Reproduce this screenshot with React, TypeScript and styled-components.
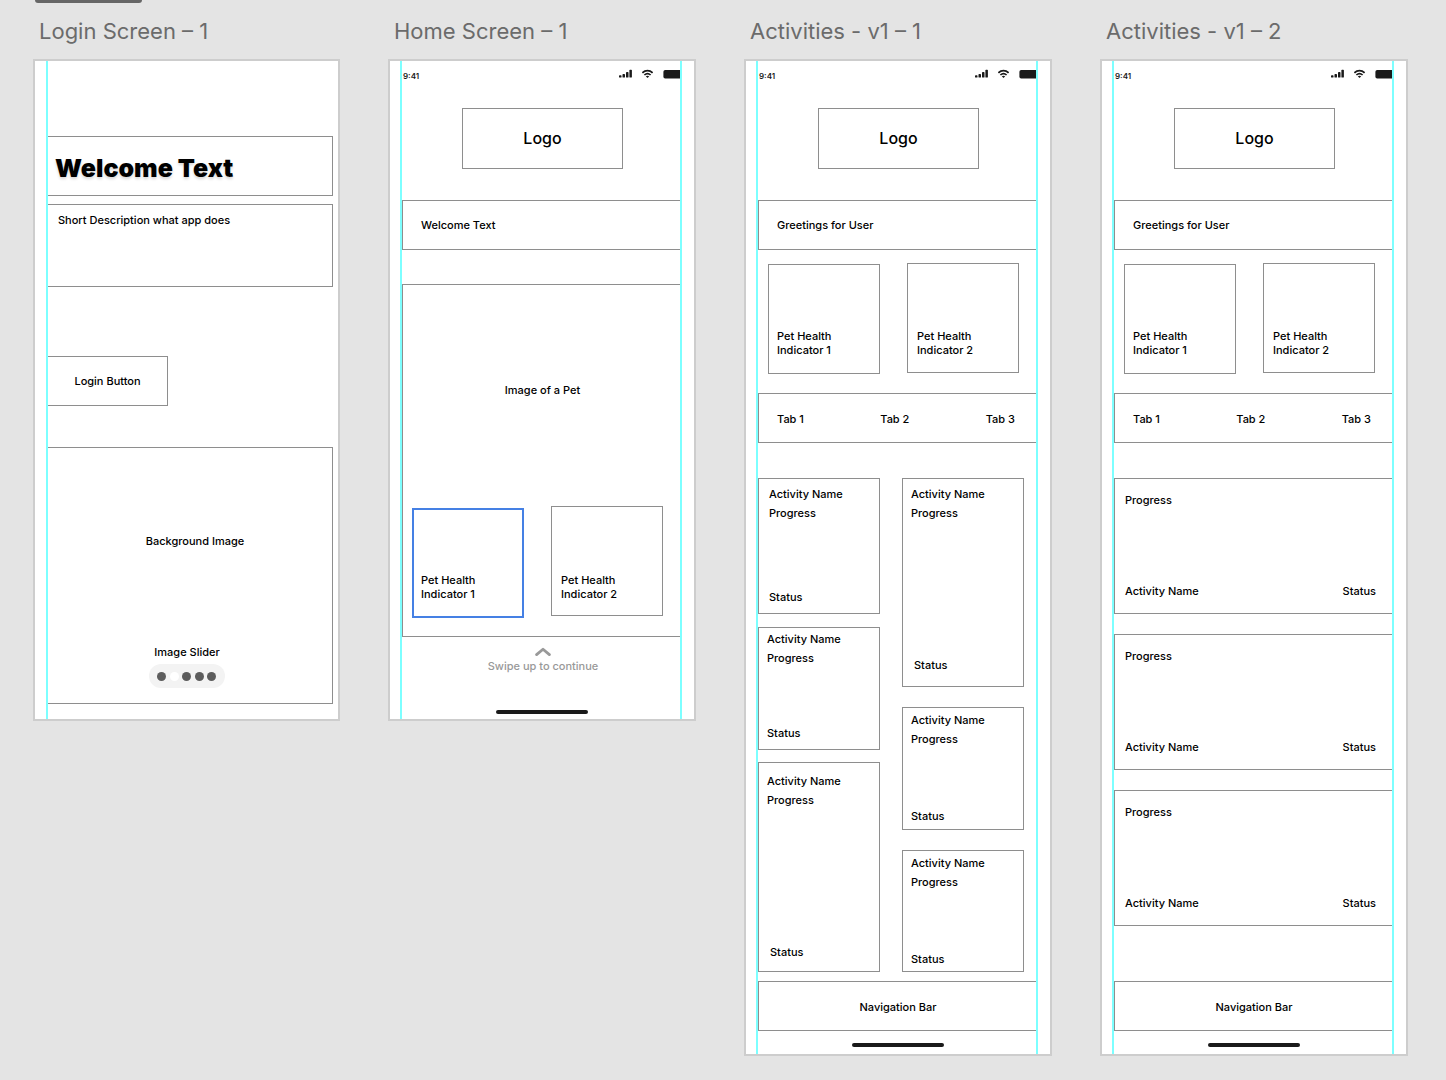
import React from "react";
import styled, { createGlobalStyle } from "styled-components";

const LINE = "#8e8e8e";
const GUIDE = "#7dffff";
const INK = "#1a1a1a";

const GlobalStyle = createGlobalStyle`
  *, *::before, *::after { box-sizing: border-box; }
  body {
    margin: 0;
    background: #e4e4e4;
    color: #000;
    font-family: Inter, "Liberation Sans", sans-serif;
    font-size: 11px;
    font-weight: 500;
    line-height: 14px;
  }
  h1, h2, p { margin: 0; font: inherit; }
  button { margin: 0; padding: 0; border: 0; background: none; color: inherit; font: inherit; }
`;

const Canvas = styled.main`
  min-height: 100vh;
  padding-bottom: 24px;
`;

const CanvasTab = styled.div`
  width: 107px;
  height: 3px;
  margin-left: 35px;
  border-radius: 0 0 6px 6px;
  background: #666;
`;

const Boards = styled.div`
  display: grid;
  grid-template-columns: 307fr 308fr 308fr 308fr;
  align-items: start;
  gap: 48px;
  padding: 14px 38px 0 33px;
`;

const BoardTitle = styled.h2`
  padding: 0 6px;
  margin-bottom: 14px;
  color: #6b6b6b;
  font-size: 22px;
  font-weight: 400;
  line-height: 28px;
  white-space: nowrap;
`;

const Artboard = styled.div<{ $single?: boolean }>`
  display: flex;
  border: 2px solid #cdcdcd;
  background: #fff;
  padding: ${(p) => (p.$single ? "0 5px 0 11px" : "0 12px 0 10px")};
`;

const Guides = styled.div<{ $single?: boolean }>`
  flex: 1;
  min-width: 0;
  display: flex;
  flex-direction: column;
  border-left: 2px solid ${GUIDE};
  border-right: ${(p) => (p.$single ? "0" : `2px solid ${GUIDE}`)};
`;

/* login */

const LoginBody = styled.div`
  display: flex;
  flex-direction: column;
  padding: 75px 0 15px;
`;

const OpenLeftBox = styled.div`
  border: 1px solid ${LINE};
  border-left: 0;
`;

const Headline = styled(OpenLeftBox)`
  display: flex;
  align-items: center;
  height: 60px;
  padding: 4px 7px 0;
`;

const HeadlineText = styled.h1`
  font-size: 25px;
  font-weight: 900;
  line-height: 30px;
  text-shadow: 0 2px 3px rgba(0, 0, 0, 0.16);
  white-space: nowrap;
`;

const Description = styled(OpenLeftBox)`
  height: 83px;
  margin-top: 8px;
  padding: 8px 10px;
`;

const LoginButton = styled.button`
  width: 120px;
  height: 50px;
  margin-top: 69px;
  border: 1px solid ${LINE};
  border-left: 0;
`;

const Background = styled(OpenLeftBox)`
  display: flex;
  flex-direction: column;
  justify-content: space-between;
  height: 257px;
  margin-top: 41px;
  padding: 86px 0 15px;
  text-align: center;
`;

const BackgroundLabel = styled.p`
  padding-left: 10px;
`;

const Slider = styled.div`
  display: flex;
  flex-direction: column;
  align-items: center;
  gap: 5px;
  padding-right: 6px;
`;

const Dots = styled.div`
  display: flex;
  align-items: center;
  justify-content: space-between;
  width: 76px;
  height: 24px;
  padding: 0 9px 0 8px;
  border-radius: 12px;
  background: #f3f3f3;
`;

const Dot = styled.button<{ $on?: boolean }>`
  width: 9px;
  height: 9px;
  border-radius: 50%;
  background: ${(p) => (p.$on ? "#fff" : "#5c5c5c")};
`;

/* phone chrome */

const StatusRow = styled.div`
  display: flex;
  justify-content: space-between;
  height: 47px;
  padding: 8px 0 0 1px;
`;

const Clock = styled.span`
  padding-top: 1px;
  color: ${INK};
  font-size: 8px;
  font-weight: 600;
  line-height: 12px;
`;

const StatusIcons = styled.div`
  display: flex;
  align-items: flex-start;
  gap: 10px;
`;

const LogoRow = styled.div`
  display: flex;
  justify-content: center;
  padding-left: 3px;
`;

const Logo = styled.div`
  display: flex;
  align-items: center;
  justify-content: center;
  width: 161px;
  height: 61px;
  padding-bottom: 2px;
  border: 1px solid ${LINE};
  font-size: 16px;
  line-height: 20px;
`;

const OpenRightBox = styled.div`
  border: 1px solid ${LINE};
  border-right: 0;
`;

const Banner = styled(OpenRightBox)`
  display: flex;
  align-items: center;
  height: 50px;
  margin-top: 31px;
  padding: 0 18px;
`;

const HomeBar = styled.div<{ $bottom: number }>`
  align-self: center;
  width: 92px;
  height: 4px;
  margin: auto 0 ${(p) => p.$bottom}px 2px;
  border-radius: 2px;
  background: ${INK};
`;

/* home */

const PetImage = styled(OpenRightBox)`
  display: flex;
  flex-direction: column;
  justify-content: space-between;
  height: 353px;
  margin-top: 34px;
  padding: 98px 0 18px;
`;

const PetLabel = styled.p`
  text-align: center;
  padding-left: 2px;
`;

const Pair = styled.div<{ $inBox?: boolean }>`
  display: grid;
  grid-template-columns: 1fr 1fr;
  align-items: end;
  gap: 27px;
  padding: ${(p) => (p.$inBox ? "0 17px 0 9px" : "0 17px 0 10px")};
`;

const Indicator = styled.div<{ $selected?: boolean; $raise?: number }>`
  display: flex;
  align-items: flex-end;
  height: 110px;
  margin-bottom: ${(p) => p.$raise ?? 0}px;
  padding: 0 ${(p) => (p.$selected ? 7 : p.$raise ? 9 : 8)}px ${(p) => (p.$selected ? 15 : 16 - (p.$raise ?? 0))}px;
  border: ${(p) => (p.$selected ? "2px solid #4580e4" : `1px solid ${LINE}`)};
`;

const Swipe = styled.button`
  display: flex;
  flex-direction: column;
  align-items: center;
  align-self: center;
  gap: 2px;
  margin: 10px 0 0 4px;
  color: #999;
`;

const HomeTail = styled.div`
  display: flex;
  flex-direction: column;
  height: 82px;
`;

/* activities */

const ActivityHead = styled.div`
  padding-top: 13px;
`;

const Tabs = styled(OpenRightBox)`
  display: flex;
  align-items: center;
  justify-content: space-between;
  height: 50px;
  margin-top: 19px;
  padding: 2px 21px 0 18px;
`;

const Columns = styled.div`
  display: grid;
  grid-template-columns: 1fr 1fr;
  gap: 22px;
  height: 494px;
  margin-top: 35px;
  padding-right: 12px;
`;

const Column = styled.div`
  display: flex;
  flex-direction: column;
  justify-content: space-between;
`;

const Card = styled.article<{ $h: number; $pad: string }>`
  display: flex;
  flex-direction: column;
  height: ${(p) => p.$h}px;
  padding: ${(p) => p.$pad};
  border: 1px solid ${LINE};
  line-height: 19px;
`;

const CardStatus = styled.p<{ $indent?: boolean }>`
  margin-top: auto;
  padding-left: ${(p) => (p.$indent ? 3 : 0)}px;
`;

const List = styled.div`
  display: flex;
  flex-direction: column;
  gap: 20px;
  height: 494px;
  margin-top: 35px;
`;

const ListItem = styled(OpenRightBox)`
  display: flex;
  flex-direction: column;
  justify-content: space-between;
  height: 136px;
  padding: 14px 16px 15px 10px;
`;

const ListFoot = styled.div`
  display: flex;
  justify-content: space-between;
`;

const BottomNav = styled.nav`
  display: flex;
  align-items: center;
  justify-content: center;
  height: 50px;
  margin-top: 9px;
  padding: 2px 0 0 1px;
  border: 1px solid ${LINE};
  border-right: 0;
`;

const ActivityTail = styled.div`
  display: flex;
  flex-direction: column;
  height: 23px;
`;

function PhoneTop() {
  return (
    <>
      <StatusRow>
        <Clock>9:41</Clock>
        <StatusIcons>
          <svg width="13" height="10" viewBox="0 0 13 10" fill={INK} aria-hidden="true">
            <rect x="0" y="6.2" width="2.5" height="2.4" rx="0.7" />
            <rect x="3.5" y="5" width="2.5" height="3.6" rx="0.7" />
            <rect x="7" y="3" width="2.5" height="5.6" rx="0.7" />
            <rect x="10.4" y="0.8" width="2.5" height="7.8" rx="0.7" />
          </svg>
          <svg width="11" height="10" viewBox="0 0 11 10" fill="none" stroke={INK} strokeWidth="1.7" aria-hidden="true">
            <path d="M0.4 3.8C3.2 0.9 7.8 0.9 10.6 3.8" />
            <path d="M2.4 6C4.2 4.3 6.8 4.3 8.6 6" />
            <path d="M5.5 9L3.8 7.3Q5.5 6.1 7.2 7.3Z" fill={INK} stroke="none" />
          </svg>
          <svg width="17" height="10" viewBox="0 0 17 10" fill={INK} aria-hidden="true">
            <path d="M2.2 1H17V9.6H2.2Q0.4 9.6 0.4 7.8V2.8Q0.4 1 2.2 1Z" />
          </svg>
        </StatusIcons>
      </StatusRow>
      <LogoRow>
        <Logo>Logo</Logo>
      </LogoRow>
    </>
  );
}

function Indicators({ inBox }: { inBox?: boolean }) {
  return (
    <Pair $inBox={inBox}>
      <Indicator $selected={inBox}>
        Pet Health
        <br />
        Indicator 1
      </Indicator>
      <Indicator $raise={inBox ? 2 : 1}>
        Pet Health
        <br />
        Indicator 2
      </Indicator>
    </Pair>
  );
}

function ActivityTop() {
  return (
    <>
      <PhoneTop />
      <Banner>Greetings for User</Banner>
      <ActivityHead>
        <Indicators />
      </ActivityHead>
      <Tabs>
        <button type="button">Tab 1</button>
        <button type="button">Tab 2</button>
        <button type="button">Tab 3</button>
      </Tabs>
    </>
  );
}

function ActivityBottom() {
  return (
    <>
      <BottomNav>Navigation Bar</BottomNav>
      <ActivityTail>
        <HomeBar $bottom={7} />
      </ActivityTail>
    </>
  );
}

type CardData = { h: number; pad: string; indent?: boolean };

const leftCards: CardData[] = [
  { h: 136, pad: "6px 10px" },
  { h: 123, pad: "2px 8px 6px" },
  { h: 210, pad: "9px 8px 9px", indent: true },
];

const rightCards: CardData[] = [
  { h: 209, pad: "6px 8px 11px", indent: true },
  { h: 123, pad: "3px 8px 3px" },
  { h: 122, pad: "3px 8px 2px" },
];

function CardColumn({ cards }: { cards: CardData[] }) {
  return (
    <Column>
      {cards.map((card, i) => (
        <Card key={i} $h={card.h} $pad={card.pad}>
          <p>Activity Name</p>
          <p>Progress</p>
          <CardStatus $indent={card.indent}>Status</CardStatus>
        </Card>
      ))}
    </Column>
  );
}

export default function App() {
  return (
    <Canvas>
      <GlobalStyle />
      <CanvasTab />
      <Boards>
        <section>
          <BoardTitle>Login Screen – 1</BoardTitle>
          <Artboard $single>
            <Guides $single>
              <LoginBody>
                <Headline>
                  <HeadlineText>Welcome Text</HeadlineText>
                </Headline>
                <Description>Short Description what app does</Description>
                <LoginButton type="button">Login Button</LoginButton>
                <Background>
                  <BackgroundLabel>Background Image</BackgroundLabel>
                  <Slider>
                    <p>Image Slider</p>
                    <Dots>
                      {[0, 1, 2, 3, 4].map((n) => (
                        <Dot key={n} type="button" $on={n === 1} aria-label={`Image ${n + 1}`} />
                      ))}
                    </Dots>
                  </Slider>
                </Background>
              </LoginBody>
            </Guides>
          </Artboard>
        </section>

        <section>
          <BoardTitle>Home Screen – 1</BoardTitle>
          <Artboard>
            <Guides>
              <PhoneTop />
              <Banner>Welcome Text</Banner>
              <PetImage>
                <PetLabel>Image of a Pet</PetLabel>
                <Indicators inBox />
              </PetImage>
              <HomeTail>
                <Swipe type="button">
                  <svg width="16" height="10" viewBox="0 0 16 10" fill="none" stroke="#999" strokeWidth="2.8" strokeLinecap="round" strokeLinejoin="round" aria-hidden="true">
                    <path d="M1.6 7.6L8 2.2L14.4 7.6" />
                  </svg>
                  <span>Swipe up to continue</span>
                </Swipe>
                <HomeBar $bottom={5} />
              </HomeTail>
            </Guides>
          </Artboard>
        </section>

        <section>
          <BoardTitle>Activities - v1 – 1</BoardTitle>
          <Artboard>
            <Guides>
              <ActivityTop />
              <Columns>
                <CardColumn cards={leftCards} />
                <CardColumn cards={rightCards} />
              </Columns>
              <ActivityBottom />
            </Guides>
          </Artboard>
        </section>

        <section>
          <BoardTitle>Activities - v1 – 2</BoardTitle>
          <Artboard>
            <Guides>
              <ActivityTop />
              <List>
                {[0, 1, 2].map((n) => (
                  <ListItem key={n}>
                    <p>Progress</p>
                    <ListFoot>
                      <p>Activity Name</p>
                      <p>Status</p>
                    </ListFoot>
                  </ListItem>
                ))}
              </List>
              <ActivityBottom />
            </Guides>
          </Artboard>
        </section>
      </Boards>
    </Canvas>
  );
}
